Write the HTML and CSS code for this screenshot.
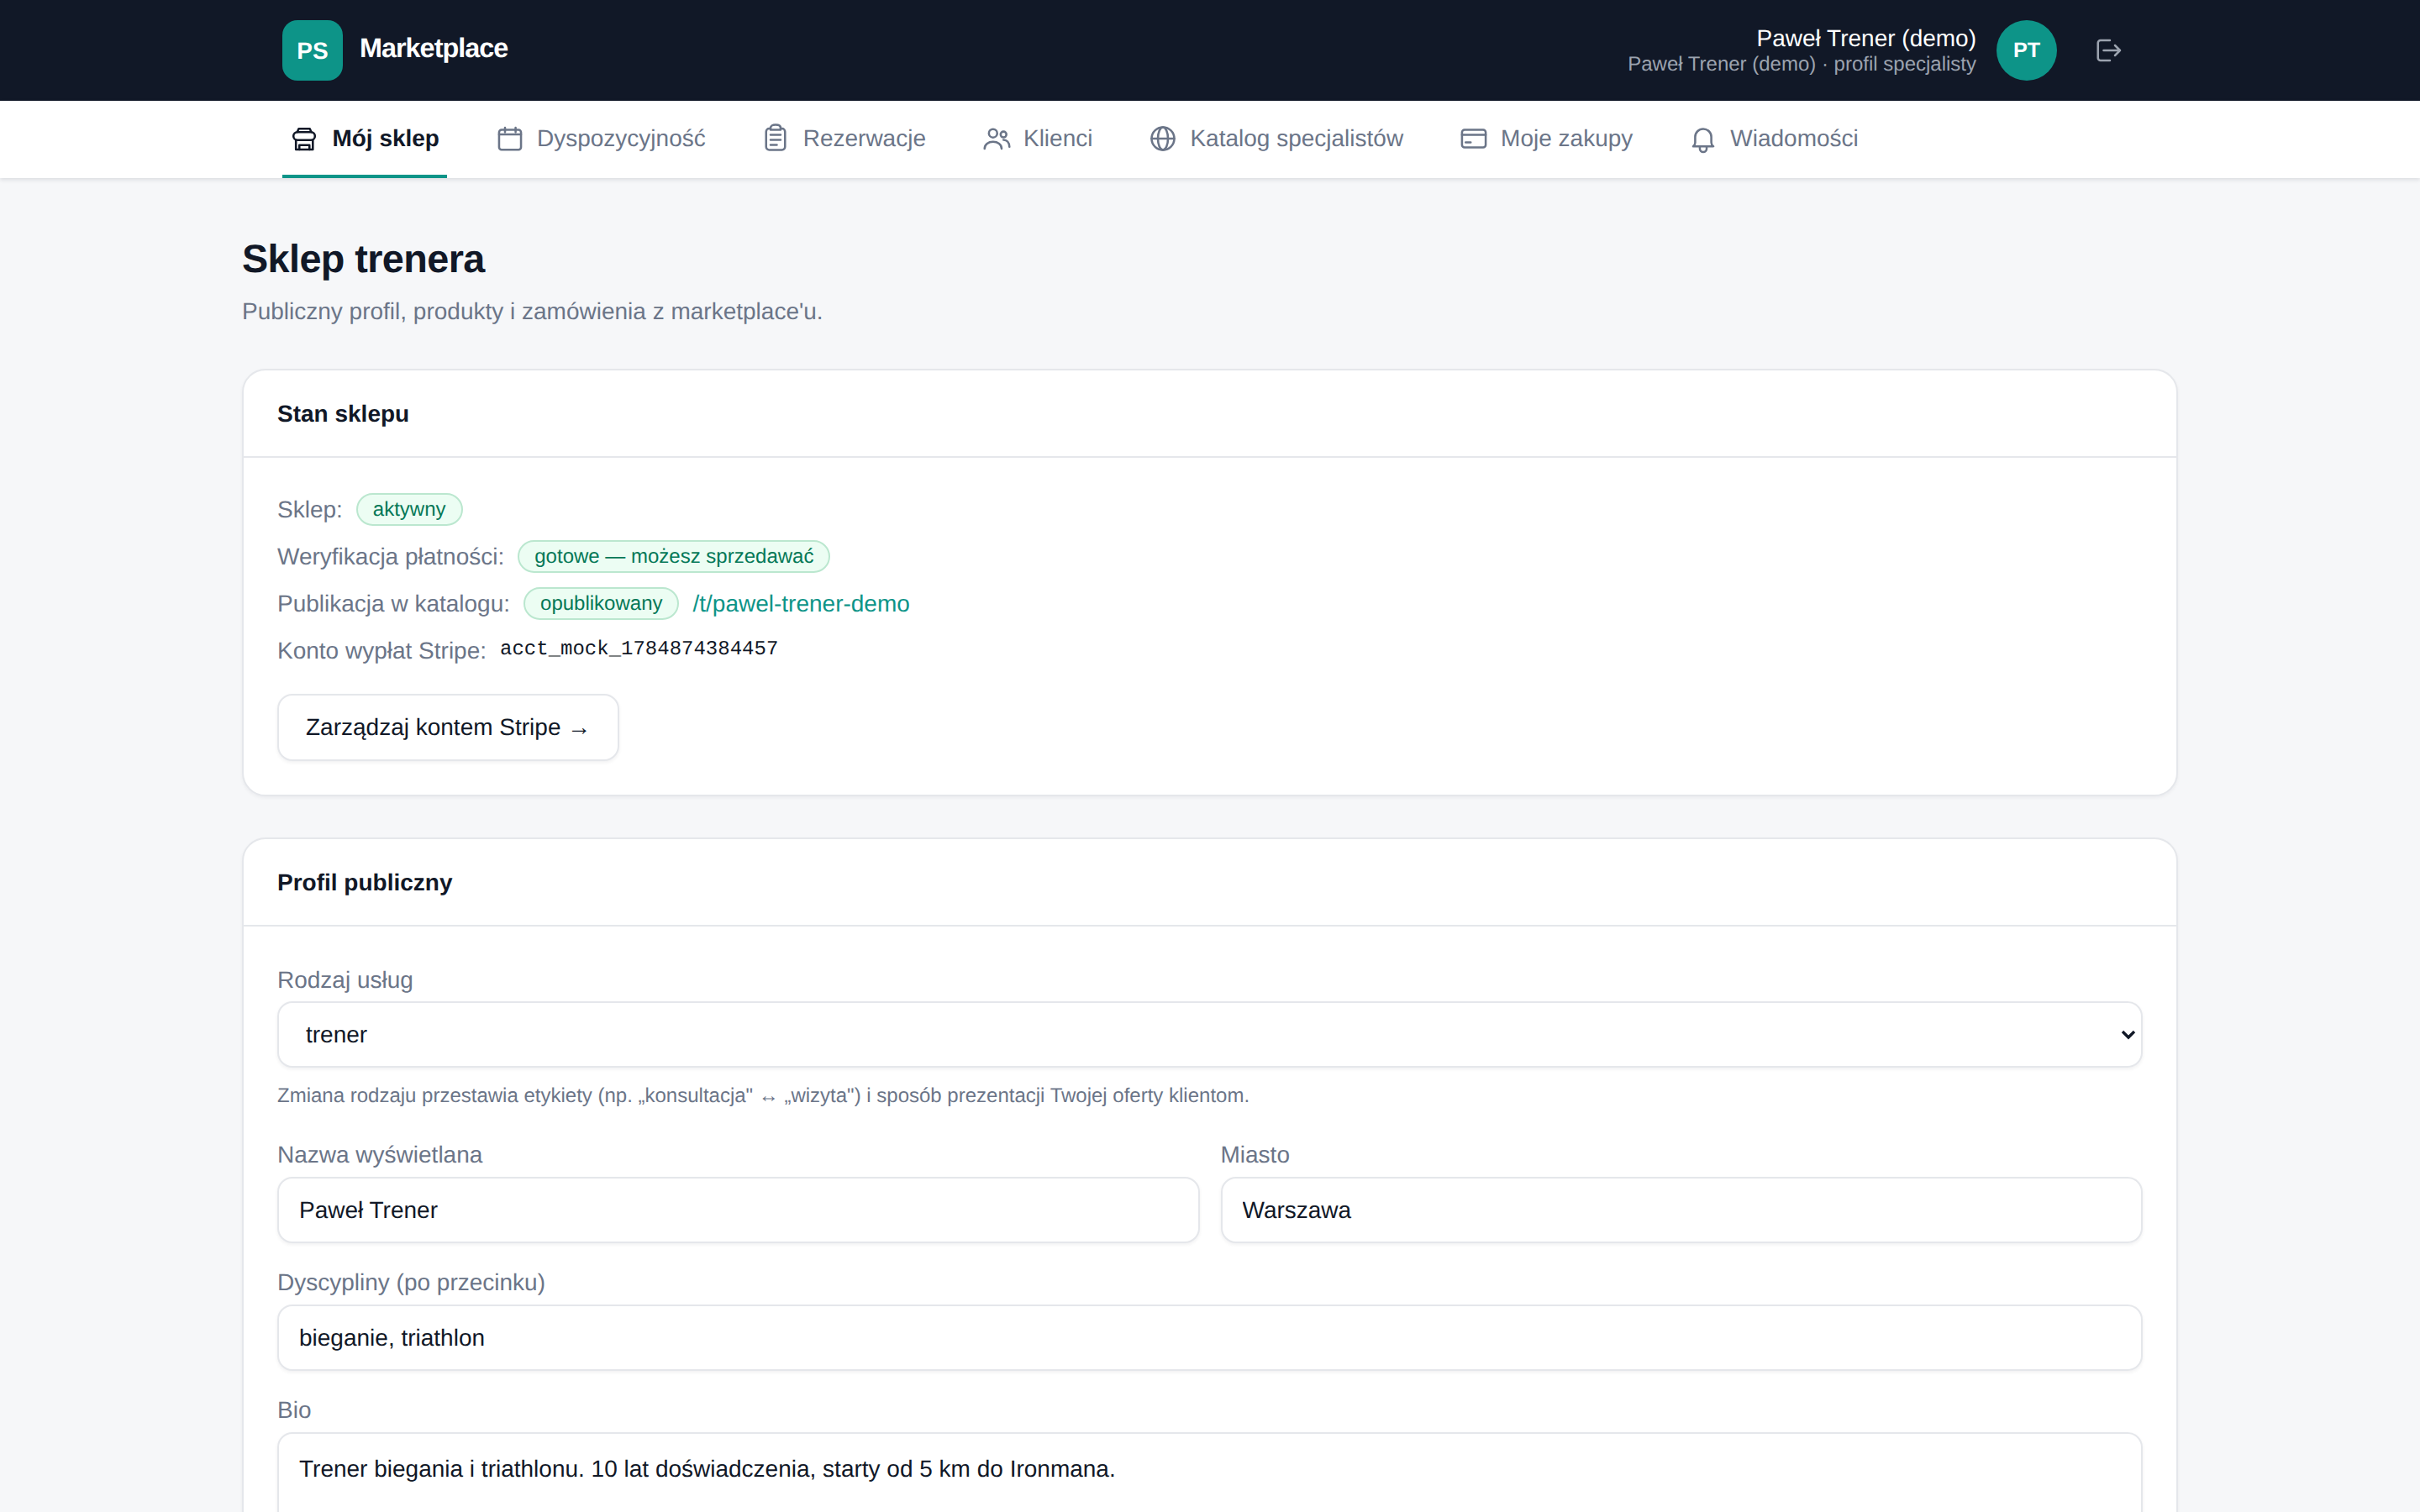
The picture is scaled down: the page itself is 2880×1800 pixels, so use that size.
FILE: index.html
```html
<!DOCTYPE html>
<html lang="pl">
<head>
    <meta charset="UTF-8">
    <meta name="viewport" content="width=device-width, initial-scale=1.0">
    <title>Sklep trenera</title>
    <link rel="stylesheet" href="styles.css">
</head>
<body>

<header class="topbar">
    <div class="brand">
        <span class="brand-logo">PS</span>
        <span class="brand-name">Marketplace</span>
    </div>
    <div class="user">
        <div class="user-text">
            <div class="user-name">Paweł Trener (demo)</div>
            <div class="user-role">Paweł Trener (demo) · profil specjalisty</div>
        </div>
        <span class="avatar">PT</span>
        <svg class="logout" viewBox="0 0 24 24"><path d="M14 4H6.5a2 2 0 0 0-2 2v12a2 2 0 0 0 2 2H14"/><path d="M9 12h13M18 8l4 4-4 4"/></svg>
    </div>
</header>

<nav class="tabs">
    <a class="tab active">
        <svg viewBox="0 0 24 24"><path d="M5.8 6.8 7 4.2h8.8l1.2 2.6"/><rect x="2.8" y="6.8" width="17.1" height="6.4" rx="3.2"/><path d="M4.8 13.2v7.5h13.4v-7.5"/><path d="M7.5 20.7v-3.5h8v3.5"/></svg>
        Mój sklep
    </a>
    <a class="tab">
        <svg viewBox="0 0 24 24"><rect x="3.3" y="5" width="17.4" height="15.8" rx="2"/><path d="M3.3 8.6h17.4M8 3.4v3.4M16.4 3.4v3.4"/></svg>
        Dyspozycyjność
    </a>
    <a class="tab">
        <svg viewBox="0 0 24 24"><path d="M8 4H7a2.5 2.5 0 0 0-2.5 2.5v12A2.5 2.5 0 0 0 7 21h10a2.5 2.5 0 0 0 2.5-2.5v-12A2.5 2.5 0 0 0 17 4h-1"/><path d="M8 5V3.5C8 2 9.6 1 12 1s4 1 4 2.5V5Z"/><path d="M8 9h8M8 13h8M8 17h5"/></svg>
        Rezerwacje
    </a>
    <a class="tab">
        <svg viewBox="0 0 24 24"><circle cx="9.2" cy="7.8" r="3.3"/><circle cx="17.5" cy="8.7" r="2.3"/><path d="M2.5 20c0-3.5 3-5.5 6.7-5.5S16 16.5 16 20"/><path d="M17.5 13c2.6 0 4.5 2 4.7 5.5"/></svg>
        Klienci
    </a>
    <a class="tab">
        <svg viewBox="0 0 24 24"><circle cx="12" cy="12" r="9"/><ellipse cx="12" cy="12" rx="4" ry="9"/><path d="M3 12h18"/></svg>
        Katalog specjalistów
    </a>
    <a class="tab">
        <svg viewBox="0 0 24 24"><rect x="2.6" y="5" width="18.8" height="14" rx="2"/><path d="M2.6 9h18.8M5.5 15h4"/></svg>
        Moje zakupy
    </a>
    <a class="tab">
        <svg viewBox="0 0 24 24"><path d="M4 18.2c1-.7 1.6-1.6 1.6-3v-4.5a6.4 6.4 0 0 1 12.8 0V15c0 1.4.6 2.4 1.6 3.2Z"/><path d="M9.3 19v1a2.7 2.7 0 0 0 5.4 0v-1"/></svg>
        Wiadomości
    </a>
</nav>

<main class="content">
    <h1 class="page-title">Sklep trenera</h1>
    <p class="page-sub">Publiczny profil, produkty i zamówienia z marketplace'u.</p>

    <section class="card">
        <h2 class="card-head">Stan sklepu</h2>
        <div class="card-body">
            <div class="status-row"><span class="muted">Sklep:</span><span class="pill">aktywny</span></div>
            <div class="status-row"><span class="muted">Weryfikacja płatności:</span><span class="pill">gotowe — możesz sprzedawać</span></div>
            <div class="status-row"><span class="muted">Publikacja w katalogu:</span><span class="pill">opublikowany</span><a class="link">/t/pawel-trener-demo</a></div>
            <div class="status-row"><span class="muted">Konto wypłat Stripe:</span><code class="acct">acct_mock_1784874384457</code></div>
            <button class="btn">Zarządzaj kontem Stripe →</button>
        </div>
    </section>

    <section class="card">
        <h2 class="card-head">Profil publiczny</h2>
        <div class="card-body form-body">
            <label class="field-label first-label">Rodzaj usług</label>
            <div class="select-wrap">
                <select class="input select">
                    <option>trener</option>
                </select>
                <svg class="chevron" viewBox="0 0 18 12"><path d="M2 2l7 7 7-7"/></svg>
            </div>
            <p class="hint">Zmiana rodzaju przestawia etykiety (np. „konsultacja" ↔ „wizyta") i sposób prezentacji Twojej oferty klientom.</p>

            <div class="two-cols">
                <div>
                    <label class="field-label">Nazwa wyświetlana</label>
                    <input class="input" type="text" value="Paweł Trener">
                </div>
                <div>
                    <label class="field-label">Miasto</label>
                    <input class="input" type="text" value="Warszawa">
                </div>
            </div>

            <label class="field-label">Dyscypliny (po przecinku)</label>
            <input class="input" type="text" value="bieganie, triathlon">

            <label class="field-label">Bio</label>
            <textarea class="input bio" rows="4">Trener biegania i triathlonu. 10 lat doświadczenia, starty od 5 km do Ironmana.</textarea>
        </div>
    </section>
</main>

</body>
</html>
```

FILE: styles.css
```css
* {
    box-sizing: border-box;
}
html, body {
    height: 100%;
    overflow: hidden;
}
body {
    margin: 0;
    background-color: #f6f7f9;
    color: #111827;
    font-family: "Liberation Sans", Arial, sans-serif;
    font-size: 28px;
    text-rendering: geometricPrecision;
}
svg {
    fill: none;
    stroke: currentColor;
    stroke-width: 1.7;
    stroke-linecap: round;
    stroke-linejoin: round;
    flex: none;
}

/* top bar */
.topbar {
    display: flex;
    justify-content: space-between;
    align-items: center;
    height: 120px;
    padding: 0 336px;
    background-color: #111827;
    color: #fff;
}
.brand {
    display: flex;
    align-items: center;
    gap: 20px;
}
.brand-logo {
    display: flex;
    justify-content: center;
    align-items: center;
    width: 72px;
    height: 72px;
    border-radius: 18px;
    background-color: #0d9488;
    padding-top: 2px;
    font-size: 28px;
    font-weight: 700;
}
.brand-name {
    font-size: 32.4px;
    font-weight: 700;
    letter-spacing: -1px;
    margin-bottom: 5px;
}
.user {
    display: flex;
    align-items: center;
}
.user-text {
    text-align: right;
    margin-right: 24px;
}
.user-name {
    line-height: 32px;
}
.user-role {
    margin-top: 1px;
    font-size: 24px;
    line-height: 28px;
    color: #9ca3af;
}
.avatar {
    display: flex;
    justify-content: center;
    align-items: center;
    width: 72px;
    height: 72px;
    border-radius: 50%;
    background-color: #0d9488;
    font-size: 25.2px;
    font-weight: 700;
}
.logout {
    width: 36px;
    height: 36px;
    margin: 0 18px 0 42px;
    color: #9ca3af;
}

/* tabs */
.tabs {
    display: flex;
    gap: 47.6px;
    height: 92px;
    padding: 0 336px;
    background-color: #fff;
    box-shadow: 0 2px 5px rgba(17, 24, 39, 0.12);
}
.tab {
    display: flex;
    align-items: center;
    gap: 14.4px;
    height: 92px;
    padding: 1px 9px 0;
    border-bottom: 4px solid transparent;
    color: #6b7588;
}
.tab svg {
    width: 36px;
    height: 36px;
}
.tab.active {
    border-bottom-color: #0d9488;
    color: #111827;
    font-weight: 700;
}

/* page */
.content {
    width: 2304px;
    margin: 0 auto;
}
.page-title {
    margin: 0;
    padding-top: 67px;
    font-size: 46.8px;
    line-height: 58px;
    letter-spacing: -0.6px;
}
.page-sub {
    margin: 16px 0 0;
    line-height: 36px;
    color: #6b7588;
}

.card {
    margin-top: 50px;
    background-color: #fff;
    border: 2px solid #e5e7eb;
    border-radius: 28px;
    box-shadow: 0 2px 4px rgba(17, 24, 39, 0.05);
}
.card + .card {
    margin-top: 49px;
}
.card-head {
    margin: 0;
    padding: 36px 40px 34px;
    border-bottom: 2px solid #e5e7eb;
    font-size: 28px;
    line-height: 32px;
}
.card-body {
    padding: 42px 40px 40px;
}
.form-body {
    padding-top: 46px;
}

.status-row {
    display: flex;
    align-items: center;
    gap: 16px;
    height: 39px;
    margin-bottom: 17px;
}
.muted {
    color: #6b7588;
}
.pill {
    display: flex;
    align-items: center;
    height: 39px;
    padding: 0 18px;
    border: 2px solid #bbe7cf;
    border-radius: 20px;
    background-color: #ecfdf3;
    color: #047857;
    font-size: 24px;
}
.link {
    color: #0d9488;
}
.acct {
    margin-bottom: 2px;
    font-family: "Liberation Mono", monospace;
    font-size: 24px;
}
.btn {
    display: block;
    height: 80px;
    margin-top: 32px;
    padding: 0 32px;
    background-color: #fff;
    border: 2px solid #e5e7eb;
    border-radius: 18px;
    box-shadow: 0 2px 4px rgba(17, 24, 39, 0.06);
    color: #111827;
    font-family: inherit;
    font-size: 28px;
    text-rendering: geometricPrecision;
}

/* form */
.field-label {
    display: block;
    margin-bottom: 8px;
    line-height: 36px;
    color: #6b7588;
}
.first-label {
    margin-bottom: 7px;
}
.input {
    display: block;
    width: 100%;
    height: 79px;
    padding: 0 24px;
    background-color: #fff;
    border: 2px solid #e5e7eb;
    border-radius: 18px;
    box-shadow: 0 2px 4px rgba(17, 24, 39, 0.06);
    color: #111827;
    font-family: inherit;
    font-size: 28px;
    text-rendering: geometricPrecision;
}
.select-wrap {
    position: relative;
}
.select {
    appearance: none;
    padding-left: 32px;
}
.chevron {
    position: absolute;
    right: 8px;
    top: 34px;
    width: 18px;
    height: 12px;
    stroke-width: 3.4;
    stroke-linecap: butt;
    stroke-linejoin: miter;
}
.hint {
    margin: 18px 0 0;
    line-height: 32px;
    color: #6b7588;
    font-size: 24px;
}
.two-cols {
    display: grid;
    grid-template-columns: 1fr 1fr;
    gap: 25px;
    margin-top: 36px;
}
.input + .field-label,
.two-cols + .field-label {
    margin-top: 29px;
}
.bio {
    height: 200px;
    padding-top: 22px;
    line-height: 40px;
    resize: none;
}
```
